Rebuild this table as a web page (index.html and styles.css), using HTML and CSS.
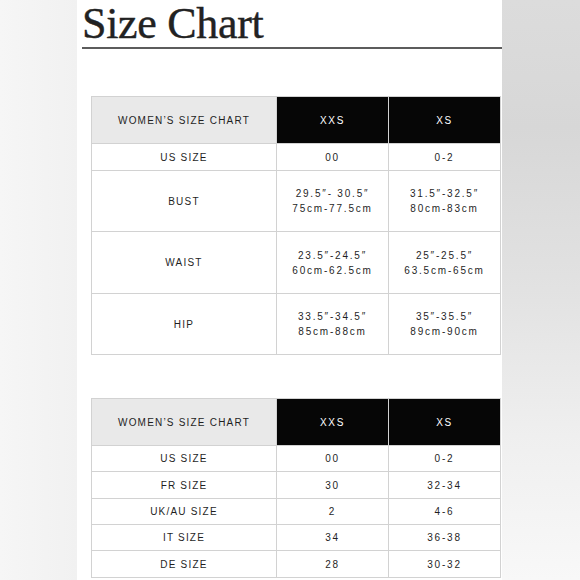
FILE: index.html
```html
<!DOCTYPE html>
<html lang="en">
<head>
<meta charset="utf-8">
<title>Size Chart</title>
<link rel="stylesheet" href="styles.css">
</head>
<body>
<div class="side side-left"></div>
<main class="panel">
  <h1 class="title">Size Chart</h1>

  <table class="chart chart-first">
    <colgroup><col class="c-label"><col class="c-size"><col class="c-size"></colgroup>
    <thead>
      <tr class="r-head">
        <th class="label-head">WOMEN’S SIZE CHART</th>
        <th class="size-head">XXS</th>
        <th class="size-head">XS</th>
      </tr>
    </thead>
    <tbody>
      <tr class="r-27"><td class="label">US SIZE</td><td class="val">00</td><td class="val">0-2</td></tr>
      <tr class="r-61"><td class="label">BUST</td><td class="val">29.5″- 30.5″<br>75cm-77.5cm</td><td class="val">31.5″-32.5″<br>80cm-83cm</td></tr>
      <tr class="r-62"><td class="label">WAIST</td><td class="val">23.5″-24.5″<br>60cm-62.5cm</td><td class="val">25″-25.5″<br>63.5cm-65cm</td></tr>
      <tr class="r-61"><td class="label">HIP</td><td class="val">33.5″-34.5″<br>85cm-88cm</td><td class="val">35″-35.5″<br>89cm-90cm</td></tr>
    </tbody>
  </table>

  <table class="chart chart-second">
    <colgroup><col class="c-label"><col class="c-size"><col class="c-size"></colgroup>
    <thead>
      <tr class="r-head">
        <th class="label-head">WOMEN’S SIZE CHART</th>
        <th class="size-head">XXS</th>
        <th class="size-head">XS</th>
      </tr>
    </thead>
    <tbody>
      <tr class="r-26"><td class="label">US SIZE</td><td class="val">00</td><td class="val">0-2</td></tr>
      <tr class="r-27"><td class="label">FR SIZE</td><td class="val">30</td><td class="val">32-34</td></tr>
      <tr class="r-26"><td class="label">UK/AU SIZE</td><td class="val">2</td><td class="val">4-6</td></tr>
      <tr class="r-26"><td class="label">IT SIZE</td><td class="val">34</td><td class="val">36-38</td></tr>
      <tr class="r-27"><td class="label">DE SIZE</td><td class="val">28</td><td class="val">30-32</td></tr>
    </tbody>
  </table>
</main>
<div class="side side-right"></div>
</body>
</html>
```

FILE: styles.css
```css
html, body {
  margin: 0;
  padding: 0;
  height: 580px;
  overflow: hidden;
}

body {
  display: flex;
  width: 580px;
  font-family: "Liberation Sans", Arial, sans-serif;
}

.side-left {
  width: 77px;
  flex: none;
  background: linear-gradient(to right, #f6f6f6, #f1f1f1);
}

.side-right {
  flex: 1;
  background: linear-gradient(to bottom, #dcdcdc 0%, #d7d7d7 22%, #e2e2e2 50%, #efefef 75%, #f8f8f8 100%);
}

.panel {
  width: 425px;
  flex: none;
  background: #ffffff;
  overflow: hidden;
  padding-left: 5px;
  box-sizing: border-box;
}

.title {
  margin: 0;
  font-family: "Liberation Serif", "Times New Roman", serif;
  font-weight: normal;
  font-size: 44px;
  line-height: 48px;
  height: 47px;
  overflow: visible;
  color: #222222;
  letter-spacing: -0.3px;
  border-bottom: 2px solid #5c5c5c;
  -webkit-text-stroke: 0.4px #222222;
}

.chart {
  border-collapse: collapse;
  table-layout: fixed;
  width: 409px;
  margin-left: 9px;
  color: #1f1f1f;
  font-size: 10px;
}

.chart-first {
  margin-top: 47px;
}

.chart-second {
  margin-top: 43px;
}

.c-label { width: 185px; }
.c-size { width: 112px; }

.chart th,
.chart td {
  border: 1px solid #d2d2d2;
  text-align: center;
  vertical-align: middle;
  padding: 0;
  font-weight: normal;
}

.label-head {
  background: #e9e9e9;
  letter-spacing: 1.2px;
}

.size-head {
  background: #060606;
  color: #ffffff;
  letter-spacing: 1.7px;
  border-color: #6a6a6a;
}

.label {
  letter-spacing: 1.2px;
}

.val {
  letter-spacing: 1.8px;
  line-height: 15px;
}

.r-head { height: 47px; }
.r-26 { height: 26px; }
.r-27 { height: 27px; }
.r-61 { height: 61px; }
.r-62 { height: 62px; }
```
